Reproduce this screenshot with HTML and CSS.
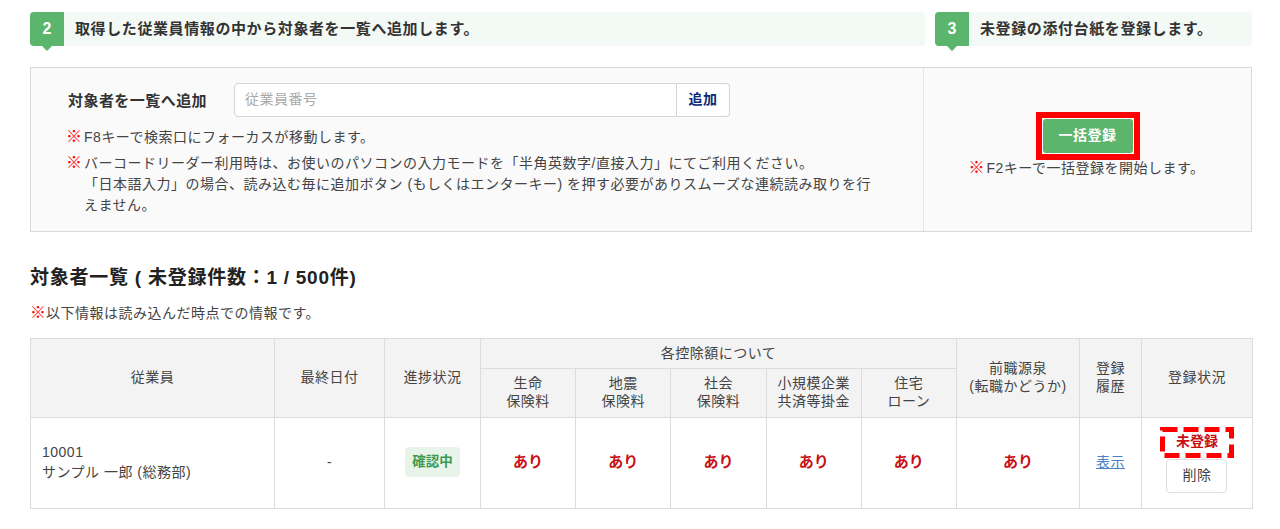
FILE: index.html
```html
<!DOCTYPE html>
<html lang="ja">
<head>
<meta charset="utf-8">
<title>対象者一覧</title>
<link rel="stylesheet" href="styles.css">
</head>
<body>
<div class="steps">
  <div class="step step-main"><span class="badge">2</span><span class="step-text">取得した従業員情報の中から対象者を一覧へ追加します。</span></div>
  <div class="step step-side"><span class="badge">3</span><span class="step-text">未登録の添付台紙を登録します。</span></div>
</div>
<div class="panel">
  <div class="panel-left">
    <div class="search-row">
      <span class="search-label">対象者を一覧へ追加</span>
      <div class="search-group">
        <div class="search-input">従業員番号</div>
        <div class="search-btn">追加</div>
      </div>
    </div>
    <p class="note note-first"><span class="mark">※</span><span>F8キーで検索口にフォーカスが移動します。</span></p>
    <p class="note note-second"><span class="mark">※</span><span>バーコードリーダー利用時は、お使いのパソコンの入力モードを「半角英数字/直接入力」にてご利用ください。<br>「日本語入力」の場合、読み込む毎に追加ボタン (もしくはエンターキー) を押す必要がありスムーズな連続読み取りを行えません。</span></p>
  </div>
  <div class="panel-right">
    <div class="bulk-frame"><div class="bulk-btn">一括登録</div></div>
    <p class="bulk-note"><span class="mark">※</span>F2キーで一括登録を開始します。</p>
  </div>
</div>
<h2 class="list-title">対象者一覧 ( 未登録件数：1 / 500件)</h2>
<p class="list-note"><span class="mark">※</span>以下情報は読み込んだ時点での情報です。</p>
<table class="grid">
  <colgroup>
    <col class="c-emp"><col class="c-date"><col class="c-prog">
    <col class="c-ded"><col class="c-ded"><col class="c-ded"><col class="c-ded"><col class="c-ded">
    <col class="c-prev"><col class="c-hist"><col class="c-stat">
  </colgroup>
  <thead>
    <tr class="head-top">
      <th rowspan="2">従業員</th>
      <th rowspan="2">最終日付</th>
      <th rowspan="2">進捗状況</th>
      <th colspan="5">各控除額について</th>
      <th rowspan="2">前職源泉<br>(転職かどうか)</th>
      <th rowspan="2">登録<br>履歴</th>
      <th rowspan="2">登録状況</th>
    </tr>
    <tr class="head-sub">
      <th>生命<br>保険料</th>
      <th>地震<br>保険料</th>
      <th>社会<br>保険料</th>
      <th>小規模企業<br>共済等掛金</th>
      <th>住宅<br>ローン</th>
    </tr>
  </thead>
  <tbody>
    <tr class="body-row">
      <td class="left">10001<br>サンプル 一郎 (総務部)</td>
      <td>-</td>
      <td><span class="pill">確認中</span></td>
      <td class="yes">あり</td>
      <td class="yes">あり</td>
      <td class="yes">あり</td>
      <td class="yes">あり</td>
      <td class="yes">あり</td>
      <td class="yes">あり</td>
      <td><a class="link" href="#">表示</a></td>
      <td class="status-cell">
        <div class="status-wrap">
          <div class="status">未登録<svg class="status-frame" width="74" height="31" viewBox="0 0 74 31" aria-hidden="true"><rect x="2.5" y="2.5" width="69" height="26" fill="none" stroke="#f00" stroke-width="5" stroke-dasharray="15 6"/></svg></div>
          <div class="del-btn">削除</div>
        </div>
      </td>
    </tr>
  </tbody>
</table>
</body>
</html>
```

FILE: styles.css
```css
* { box-sizing: border-box; }
html, body { margin: 0; padding: 0; background: #fff; }
body {
  padding: 12px 28px 0 30px;
  height: 529px;
  overflow: hidden;
  font-family: "Liberation Sans", "Noto Sans CJK JP", sans-serif;
  font-size: 14px;
  letter-spacing: 0.5px;
  color: #444;
}
p { margin: 0; }
.steps { display: flex; gap: 10px; }
.step {
  display: flex;
  align-items: center;
  height: 34px;
  background: #f3f9f4;
  border-radius: 4px;
}
.step-main { width: 895px; }
.step-side { width: 317px; }
.badge {
  position: relative;
  flex: none;
  width: 34px;
  height: 34px;
  background: #5cb56c;
  border-radius: 4px 0 0 4px;
  color: #fff;
  font-weight: 700;
  font-size: 16px;
  letter-spacing: 0;
  line-height: 34px;
  text-align: center;
}
.badge::after {
  content: "";
  position: absolute;
  left: 12px;
  top: 34px;
  border-left: 5px solid transparent;
  border-right: 5px solid transparent;
  border-top: 5px solid #5cb56c;
}
.step-text {
  margin: 0 0 3px 11px;
  font-size: 15px;
  font-weight: 700;
  color: #333;
  letter-spacing: 0.6px;
}
.panel {
  display: flex;
  height: 165px;
  margin-top: 21px;
  background: #fafafa;
  border: 1px solid #d9d9d9;
}
.panel-left { width: 892px; padding: 15px 0 0 37px; }
.panel-right {
  flex: 1;
  border-left: 1px solid #e6e6e6;
  display: flex;
  flex-direction: column;
  align-items: center;
  padding-top: 44px;
}
.search-row { display: flex; align-items: center; }
.search-label {
  width: 166px;
  margin-bottom: 2px;
  font-size: 15px;
  font-weight: 700;
  letter-spacing: 0.45px;
  color: #333;
}
.search-group { display: flex; width: 496px; height: 34px; }
.search-input {
  flex: 1;
  background: #fff;
  border: 1px solid #d5d5d5;
  border-radius: 4px 0 0 4px;
  padding-left: 10px;
  line-height: 30px;
  color: #aaa;
}
.search-btn {
  width: 53px;
  background: #fff;
  border: 1px solid #d5d5d5;
  border-left: 0;
  border-radius: 0 4px 4px 0;
  text-align: center;
  line-height: 31px;
  font-size: 14px;
  font-weight: 700;
  color: #0b2a7a;
}
.note { display: flex; align-items: baseline; max-width: 816px; }
.note-first { margin-top: 8px; line-height: 25px; }
.note-second { margin-top: 3px; line-height: 21px; }
.mark {
  display: inline-block;
  width: 18px;
  margin-left: -2px;
  flex: none;
  color: #f00;
  font-size: 16px;
  font-weight: 700;
  letter-spacing: 0;
  line-height: 1;
}
.bulk-frame { width: 104px; height: 48px; border: 6px solid #f00; padding: 1px; background: #fff; }
.bulk-btn {
  height: 34px;
  background: #5cb56c;
  border-radius: 3px;
  color: #fff;
  font-weight: 700;
  font-size: 14px;
  line-height: 33px;
  text-align: center;
}
.bulk-note { margin-top: -1px; line-height: 18px; }
.list-title {
  margin: 33px 0 0;
  font-size: 19px;
  line-height: 26px;
  font-weight: 700;
  letter-spacing: 0.75px;
  color: #222;
}
.list-note { margin-top: 12px; line-height: 20px; }
.list-note .mark { width: 16px; margin-left: 0; }
.grid {
  width: 1222px;
  margin-top: 15px;
  border-collapse: collapse;
  table-layout: fixed;
  font-size: 14px;
  line-height: 18px;
}
.c-emp { width: 244px; }
.c-date { width: 110px; }
.c-prog { width: 96px; }
.c-ded { width: 95.2px; }
.c-prev { width: 123px; }
.c-hist { width: 62px; }
.c-stat { width: 111px; }
.grid th, .grid td { border: 1px solid #dcdcdc; text-align: center; vertical-align: middle; padding: 0 0 3px; }
.grid th { padding: 0 0 2px; background: #f3f3f3; font-weight: 400; }
.head-top { height: 30px; }
.head-sub { height: 49px; }
.body-row { height: 91px; }
.grid td.left { text-align: left; padding-left: 11px; line-height: 20px; }
.grid td.status-cell { padding-bottom: 6px; }
.pill {
  display: inline-block;
  width: 55px;
  height: 30px;
  line-height: 30px;
  background: #e8f4ea;
  color: #3f9a50;
  border-radius: 4px;
  font-size: 13.5px;
  font-weight: 700;
  letter-spacing: 0;
}
.grid td.yes { color: #c80f14; font-size: 15px; font-weight: 700; letter-spacing: 0; }
.link { color: #4a7fc8; }
.status-wrap { display: flex; flex-direction: column; align-items: center; }
.status {
  position: relative;
  width: 74px;
  height: 31px;
  color: #c80f14;
  font-weight: 700;
  letter-spacing: 0;
  line-height: 29px;
}
.status-frame { position: absolute; left: 0; top: 0; }
.del-btn {
  width: 61px;
  height: 34px;
  margin-top: 1px;
  border: 1px solid #ddd;
  border-radius: 4px;
  background: #fff;
  line-height: 30px;
}
```
